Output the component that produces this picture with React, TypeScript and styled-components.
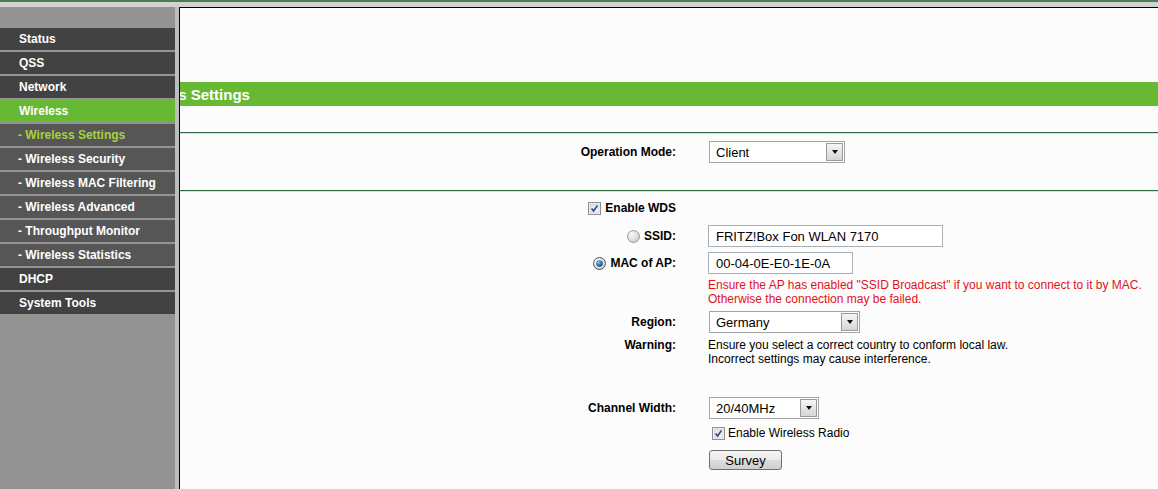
import styled, { createGlobalStyle } from "styled-components"

const GlobalStyle = createGlobalStyle`
    html, body {
        margin: 0;
        padding: 0;
    }
    body {
        font-family: "Liberation Sans", Arial, sans-serif;
        background: #fcfcfc;
        color: #000;
    }
`

const Page = styled.div`
    width: 1158px;
    height: 489px;
    overflow: hidden;
    display: flex;
    flex-direction: column;
`

const TopBar = styled.div`
    height: 5px;
    flex: none;
    border-top: 2px solid #4d7a57;
    background: #d2d2d2;
`

const Main = styled.div`
    flex: 1;
    display: flex;
    min-height: 0;
`

const Sidebar = styled.nav`
    width: 175px;
    flex: none;
    background: #939393;
    border-right: 4px solid #bdbdbd;
    padding-top: 21px;
    display: flex;
    flex-direction: column;
    gap: 2px;
`

const MenuItem = styled.div<{ $sub?: boolean; $active?: boolean; $current?: boolean }>`
    height: 22px;
    display: flex;
    align-items: center;
    padding-left: ${p => (p.$sub ? 18 : 19)}px;
    font-size: 12px;
    font-weight: bold;
    white-space: nowrap;
    color: ${p => (p.$current ? "#a6d23f" : "#fff")};
    background: ${p => (p.$active ? "#67b934" : p.$sub ? "#565656" : "#424242")};
`

const Content = styled.main`
    flex: 1;
    min-width: 0;
    overflow: hidden;
    border-left: 1px solid #000;
    border-top: 1px solid #000;
    background: #fcfcfc;
    padding-top: 74px;
`

const TitleBar = styled.div`
    height: 24px;
    background: #67b934;
    color: #fff;
    font-size: 15px;
    font-weight: bold;
    display: flex;
    align-items: center;
    white-space: nowrap;
    text-indent: -55px;
`

const Rule = styled.div<{ $mt: number }>`
    margin-top: ${p => p.$mt}px;
    height: 1px;
    background: #2f6a42;
    border-bottom: 1px solid #cde6d3;
`

const Row = styled.div<{ $mt: number; $h?: number; $top?: boolean }>`
    display: grid;
    grid-template-columns: 496px 1fr;
    column-gap: 32px;
    margin-top: ${p => p.$mt}px;
    ${p => (p.$h ? `height: ${p.$h}px;` : "")}
    align-items: ${p => (p.$top ? "start" : "center")};
`

const Label = styled.div`
    display: flex;
    justify-content: flex-end;
    align-items: center;
    gap: 4px;
    font-size: 12px;
    font-weight: bold;
    line-height: 14px;
    white-space: nowrap;
`

const Value = styled.div`
    display: flex;
    align-items: center;
    min-width: 0;
`

const Note = styled.div<{ $red?: boolean }>`
    font-size: 12px;
    line-height: 14px;
    white-space: nowrap;
    color: ${p => (p.$red ? "#e2121c" : "#000")};
`

const TextBox = styled.div<{ $w: number }>`
    box-sizing: border-box;
    width: ${p => p.$w}px;
    height: 22px;
    border: 1px solid #a9afb5;
    background: #fff;
    padding-left: 7px;
    font-size: 13px;
    display: flex;
    align-items: center;
    white-space: nowrap;
`

const SelectBox = styled.div<{ $w: number }>`
    box-sizing: border-box;
    width: ${p => p.$w}px;
    height: 22px;
    margin-left: 1px;
    border: 1px solid #a5a5a5;
    background: #fff;
    padding: 1px 1px 1px 6px;
    font-size: 13px;
    display: flex;
    align-items: center;
    justify-content: space-between;
`

const SelectArrow = styled.span`
    box-sizing: border-box;
    width: 17px;
    height: 18px;
    border: 1px solid #9b9b9b;
    background: linear-gradient(#f6f6f6, #d5d5d5);
    display: flex;
    align-items: center;
    justify-content: center;
    &::after {
        content: "";
        border-left: 3.5px solid transparent;
        border-right: 3.5px solid transparent;
        border-top: 4px solid #111;
    }
`

const CheckLine = styled.div`
    display: flex;
    align-items: center;
    gap: 3px;
    padding-left: 4px;
    font-size: 12px;
`

const Button = styled.button`
    box-sizing: border-box;
    width: 73px;
    height: 20px;
    margin-left: 1px;
    border: 1px solid #707070;
    border-radius: 3px;
    background: linear-gradient(#f3f3f3 0%, #ebebeb 50%, #dcdcdc 51%, #cfcfcf 100%);
    font-family: "Liberation Sans", Arial, sans-serif;
    font-size: 13px;
    color: #000;
    padding: 0;
`

const Checkbox = () => (
    <svg width="13" height="13" viewBox="0 0 13 13">
        <defs>
            <linearGradient id="cbg" x1="0" y1="0" x2="1" y2="1">
                <stop offset="0" stopColor="#dfe3ea" />
                <stop offset="1" stopColor="#f7f8fa" />
            </linearGradient>
        </defs>
        <rect x="0.5" y="0.5" width="12" height="12" fill="#fff" stroke="#8e8f8f" />
        <rect x="2" y="2" width="9" height="9" fill="url(#cbg)" stroke="#b7bcc6" strokeWidth="0.6" />
        <path d="M3.6 6.4 L5.6 9 L9.4 3.6" fill="none" stroke="#3a4f8a" strokeWidth="1.7" />
    </svg>
)

const Radio = ({ checked }: { checked?: boolean }) => (
    <svg width="13" height="13" viewBox="0 0 13 13">
        <defs>
            <radialGradient id="rbg" cx="0.35" cy="0.3" r="0.8">
                <stop offset="0" stopColor="#fafafa" />
                <stop offset="1" stopColor="#c9c9c9" />
            </radialGradient>
            <radialGradient id="rdot" cx="0.4" cy="0.35" r="0.7">
                <stop offset="0" stopColor="#8fd0f4" />
                <stop offset="0.6" stopColor="#1f6fb4" />
                <stop offset="1" stopColor="#0d3e73" />
            </radialGradient>
        </defs>
        <circle cx="6.5" cy="6.5" r="6" fill="url(#rbg)" stroke={checked ? "#4f5358" : "#9a9a9a"} />
        {checked ? <circle cx="6.5" cy="6.5" r="3.2" fill="url(#rdot)" /> : null}
    </svg>
)

const menu = [
    { label: "Status" },
    { label: "QSS" },
    { label: "Network" },
    { label: "Wireless", active: true },
    { label: "- Wireless Settings", sub: true, current: true },
    { label: "- Wireless Security", sub: true },
    { label: "- Wireless MAC Filtering", sub: true },
    { label: "- Wireless Advanced", sub: true },
    { label: "- Throughput Monitor", sub: true },
    { label: "- Wireless Statistics", sub: true },
    { label: "DHCP" },
    { label: "System Tools" },
]

const App = () => {
    return (
        <Page>
            <GlobalStyle />
            <TopBar />
            <Main>
                <Sidebar>
                    {menu.map(m => (
                        <MenuItem key={m.label} $sub={m.sub} $active={m.active} $current={m.current}>
                            {m.label}
                        </MenuItem>
                    ))}
                </Sidebar>
                <Content>
                    <TitleBar>Wireless Settings</TitleBar>

                    <Rule $mt={26} />
                    <Row $mt={7} $h={22}>
                        <Label>Operation Mode:</Label>
                        <Value>
                            <SelectBox $w={136}>Client<SelectArrow /></SelectBox>
                        </Value>
                    </Row>

                    <Rule $mt={27} />
                    <Row $mt={6} $h={20}>
                        <Label><Checkbox />Enable WDS</Label>
                        <Value />
                    </Row>
                    <Row $mt={7} $h={22}>
                        <Label><Radio />SSID:</Label>
                        <Value><TextBox $w={235}>FRITZ!Box Fon WLAN 7170</TextBox></Value>
                    </Row>
                    <Row $mt={5} $h={22}>
                        <Label><Radio checked />MAC of AP:</Label>
                        <Value><TextBox $w={145}>00-04-0E-E0-1E-0A</TextBox></Value>
                    </Row>
                    <Row $mt={4}>
                        <Label />
                        <div>
                            <Note $red>Ensure the AP has enabled "SSID Broadcast" if you want to connect to it by MAC.</Note>
                            <Note $red>Otherwise the connection may be failed.</Note>
                        </div>
                    </Row>
                    <Row $mt={5} $h={22}>
                        <Label>Region:</Label>
                        <Value>
                            <SelectBox $w={151}>Germany<SelectArrow /></SelectBox>
                        </Value>
                    </Row>
                    <Row $mt={5} $top>
                        <Label>Warning:</Label>
                        <div>
                            <Note>Ensure you select a correct country to conform local law.</Note>
                            <Note>Incorrect settings may cause interference.</Note>
                        </div>
                    </Row>
                    <Row $mt={31} $h={22}>
                        <Label>Channel Width:</Label>
                        <Value>
                            <SelectBox $w={110}>20/40MHz<SelectArrow /></SelectBox>
                        </Value>
                    </Row>
                    <Row $mt={7} $h={14}>
                        <Label />
                        <CheckLine><Checkbox />Enable Wireless Radio</CheckLine>
                    </Row>
                    <Row $mt={10} $h={20}>
                        <Label />
                        <Value><Button>Survey</Button></Value>
                    </Row>
                </Content>
            </Main>
        </Page>
    )
}

export default App
